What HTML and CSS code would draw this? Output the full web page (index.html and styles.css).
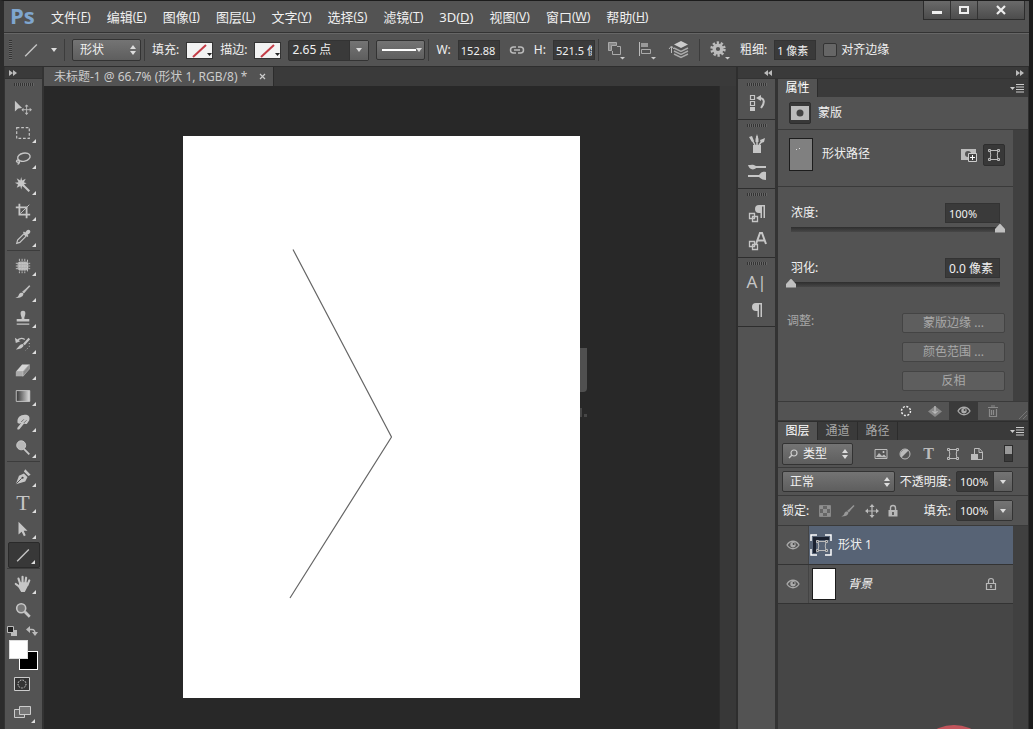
FILE: index.html
```html
<!DOCTYPE html>
<html lang="zh-CN">
<head>
<meta charset="utf-8">
<title>未标题-1</title>
<link rel="stylesheet" href="styles.css">
</head>
<body>
<svg class="sprite" aria-hidden="true">
  <defs>
    <linearGradient id="fade"><stop offset="0" stop-color="#333"/><stop offset="1" stop-color="#ddd"/></linearGradient>
  </defs>
  <symbol id="updown" viewBox="0 0 6 10"><path d="M0 4L3 0l3 4zM0 6l3 4 3-4z" fill="#ddd"/></symbol>
  <symbol id="down" viewBox="0 0 6 4"><path d="M0 0h6L3 4z" fill="#ddd"/></symbol>
  <symbol id="menu" viewBox="0 0 14 9"><path d="M0 3h5L2.500 6z" fill="#ccc"/><path d="M6 .5h8M6 3h8M6 5.500h8M6 8h8" stroke="#ccc"/></symbol>
  <symbol id="right2" viewBox="0 0 8 6"><path d="M0 0l4 3-4 3zM4 0l4 3-4 3z" fill="#bbb"/></symbol>
  <symbol id="left2" viewBox="0 0 8 6"><path d="M4 0L0 3l4 3zM8 0L4 3l4 3z" fill="#bbb"/></symbol>
  <symbol id="line" viewBox="0 0 20 20"><path d="M3.500 17L16.500 4" stroke="#c6c6c6" stroke-width="1.500"/></symbol>
  <symbol id="eye" viewBox="0 0 14 10"><path d="M1 5c3-5 9-5 12 0-3 5-9 5-12 0z" fill="none" stroke="#aaa" stroke-width="1.300"/><circle cx="7" cy="4.800" r="2.700" fill="#aaa"/><circle cx="7.600" cy="4" r="1" fill="#444"/></symbol>
  <symbol id="lock" viewBox="0 0 12 14"><path d="M3.500 6V4a2.500 2.500 0 015 0v2" fill="none" stroke="#b8b8b8" stroke-width="1.400"/><path d="M1.500 6h9v6.500h-9z" fill="#b8b8b8"/><path d="M6 8v3" stroke="#444" stroke-width="1.500"/></symbol>
  <symbol id="lock-o" viewBox="0 0 12 14"><path d="M3.500 6V4a2.500 2.500 0 015 0v2M1.500 6.500h9v6h-9z" fill="none" stroke="#b8b8b8" stroke-width="1.200"/><path d="M6 8v3" stroke="#b8b8b8" stroke-width="1.500"/></symbol>
  <symbol id="cross" viewBox="0 0 14 14"><path d="M7 2v10M2 7h10" stroke="#bbb" stroke-width="1.200"/><path d="M7 0l2.500 3h-5zM7 14l2.500-3h-5zM0 7l3-2.500v5zM14 7l-3-2.500v5z" fill="#bbb"/></symbol>
  <symbol id="vector" viewBox="0 0 14 14"><path d="M3 2.500h8M3 11.500h8M3 2.500q1.500 4.500 0 9M11 2.500q-1.500 4.500 0 9" fill="none" stroke="#bbb"/><path d="M1.500 1.500h2v2h-2zM10.500 1.500h2v2h-2zM1.500 10.500h2v2h-2zM10.500 10.500h2v2h-2z" fill="#555" stroke="#bbb"/></symbol>
  <symbol id="brush" viewBox="0 0 20 20"><path d="M18 2.500L9 9.800l2 2z" fill="#bdbdbd"/><path d="M17.500 3l-7 7.500" stroke="#bdbdbd" stroke-width="1.800"/><path d="M10 11.200c1.500 2-1 6-8.500 5.500 3-1 3.500-2.500 4-4 .8-2 3-2.500 4.500-1.500z" fill="#c6c6c6"/></symbol>
</svg>

<div class="app">
  <header class="menubar">
    <strong class="logo">Ps</strong>
    <nav class="menus" aria-label="主菜单">
      <button>文件<small>(<u>F</u>)</small></button>
      <button>编辑<small>(<u>E</u>)</small></button>
      <button>图像<small>(<u>I</u>)</small></button>
      <button>图层<small>(<u>L</u>)</small></button>
      <button>文字<small>(<u>Y</u>)</small></button>
      <button>选择<small>(<u>S</u>)</small></button>
      <button>滤镜<small>(<u>T</u>)</small></button>
      <button>3D(<u>D</u>)</button>
      <button>视图<small>(<u>V</u>)</small></button>
      <button>窗口<small>(<u>W</u>)</small></button>
      <button>帮助<small>(<u>H</u>)</small></button>
    </nav>
    <div class="winbtns">
      <button aria-label="最小化"><svg width="12" height="10"><path d="M1 6h10v3H1z" fill="#eee"/></svg></button>
      <button aria-label="最大化"><svg width="12" height="10"><path d="M2 2h8v6H2z" fill="none" stroke="#eee" stroke-width="2"/></svg></button>
      <button class="close" aria-label="关闭"><svg width="12" height="10"><path d="M2 1l8 8M10 1L2 9" stroke="#eee" stroke-width="2.200"/></svg></button>
    </div>
  </header>

  <section class="options" aria-label="选项栏">
    <span class="vgrip"></span>
    <button class="preset" aria-label="直线工具"><svg width="18" height="20"><use href="#line"/></svg><svg width="6" height="4"><use href="#down"/></svg></button>
    <span class="vsep"></span>
    <span class="select mode"><select aria-label="工具模式"><option>形状</option></select><svg width="6" height="10"><use href="#updown"/></svg></span>
    <span class="vsep"></span>
    <div class="group">
      <span>填充:</span>
      <button class="swatch" aria-label="填充"><svg width="26" height="17"><path d="M6 15L19 3" stroke="#c43c46" stroke-width="2"/><path d="M20 11h5l-2.500 3z" fill="#222"/></svg></button>
      <span>描边:</span>
      <button class="swatch" aria-label="描边"><svg width="26" height="17"><path d="M6 15L19 3" stroke="#c43c46" stroke-width="2"/><path d="M20 11h5l-2.500 3z" fill="#222"/></svg></button>
      <span class="combo stroke"><input aria-label="描边宽度" value="2.65 点"><button aria-label="展开"><svg width="6" height="4"><use href="#down"/></svg></button></span>
      <button class="dash" aria-label="描边类型"><svg width="46" height="18"><path d="M4 9h34" stroke="#fff" stroke-width="2"/><path d="M38 7h6l-3 4z" fill="#ddd"/></svg></button>
    </div>
    <span class="vsep"></span>
    <div class="group">
      <label for="w">W:</label><input class="field" id="w" value="152.88">
      <button class="link" aria-label="链接"><svg width="16" height="10" fill="none" stroke="#bbb" stroke-width="1.500"><path d="M7 2H4.500a3 3 0 000 6H7M9 2h2.500a3 3 0 010 6H9M5 5h6"/></svg></button>
      <label for="h">H:</label><input class="field" id="h" value="521.5 像素">
    </div>
    <span class="vsep"></span>
    <div class="ops">
      <button aria-label="路径操作"><svg width="20" height="20" fill="none" stroke="#aaa"><path d="M2.500 2.500h8v3h-5v5h-3z" fill="#888"/><path d="M11 6.500h3.500v8h-8V11" /><path d="M14 17h5l-2.500 2.500z" fill="#ccc" stroke="none"/></svg></button>
      <button aria-label="路径对齐"><svg width="20" height="20"><path d="M2.500 2v14" stroke="#bbb"/><path d="M4 3h7v4H4z" fill="#999"/><path d="M4.500 9.500h9v4h-9z" fill="none" stroke="#aaa"/><path d="M14 17h5l-2.500 2.500z" fill="#ccc"/></svg></button>
      <button aria-label="路径排列"><svg width="22" height="20"><path d="M3.500 7v6M1 9l2.500-3L6 9" stroke="#bbb" fill="none"/><path d="M13 1l7 3.500L13 8 6 4.500z" fill="#ccc"/><path d="M6 8l7 3.500L20 8M6 11l7 3.500L20 11M6 14l7 3.500L20 14" fill="none" stroke="#aaa" stroke-width="1.500"/></svg></button>
    </div>
    <span class="vsep"></span>
    <div class="group">
      <button class="gear" aria-label="设置"><svg width="22" height="20"><circle cx="9" cy="9" r="6.200" fill="none" stroke="#bbb" stroke-width="3" stroke-dasharray="2.200 1.690"/><circle cx="9" cy="9" r="3.800" fill="none" stroke="#bbb" stroke-width="3.400"/><path d="M16 17h5l-2.500 2.500z" fill="#ccc"/></svg></button>
      <label for="weight">粗细:</label><input class="field" id="weight" value="1 像素">
      <label class="check"><input type="checkbox">对齐边缘</label>
    </div>
  </section>

  <main class="workspace">
    <aside class="tools" aria-label="工具">
      <div class="dockhead"><svg width="8" height="6"><use href="#right2"/></svg></div>
      <span class="grip"></span>
      <div class="toolset">
        <button class="plain" aria-label="移动"><svg viewBox="0 0 20 20"><path d="M1 3v12l3.500-3.200L9 11z" fill="#c6c6c6"/><svg class="mini" x="8" y="7" width="12" height="12"><use href="#cross"/></svg></svg></button>
        <button aria-label="矩形选框"><svg viewBox="0 0 20 20"><path d="M3 4h14v12H3z" fill="none" stroke="#c6c6c6" stroke-width="1.300" stroke-dasharray="3 2"/></svg></button>
        <button aria-label="套索"><svg viewBox="0 0 20 20" fill="none" stroke="#c6c6c6" stroke-width="1.500"><ellipse cx="11" cy="8" rx="7" ry="4.500" transform="rotate(-12 11 8)"/><path d="M5 11c-3 0-3 3 0 2.500M5 11c2 2 1 4-1 5"/></svg></button>
        <button aria-label="魔棒"><svg viewBox="0 0 20 20"><path d="M8 1l1 4 4-2-2 4 3 1-3 1.500 1 3-3-1.500L8 15l-1-4-4 2 1.500-3.500L1 7.500 5 7 3 2.500 7 5z" fill="#c6c6c6"/><path d="M10 10l7 7" stroke="#c6c6c6" stroke-width="2.200"/></svg></button>
        <button aria-label="裁剪"><svg viewBox="0 0 20 20" fill="none" stroke="#c6c6c6" stroke-width="2"><path d="M2 6h12v12M6 2v12h12"/><path d="M7 13L17 3" stroke-width="1"/></svg></button>
        <button aria-label="吸管"><svg viewBox="0 0 20 20"><path d="M3 17l1-3.500 7-7L13.500 9l-7 7z" fill="#555" stroke="#c6c6c6" stroke-width="1.300"/><path d="M10 5l5 5 1-1-1-1.500C18 6 19 4 17.500 2.500S14 2 12.500 5L11 4z" fill="#c6c6c6"/></svg></button>
      </div>
      <div class="toolset">
        <button aria-label="修补"><svg viewBox="0 0 20 20"><rect x="4" y="5" width="12" height="10" rx="3" fill="#b0b0b0"/><path d="M6 2v16M9 2v16M12 2v16M15 3v14M2 7h16M2 10h16M2 13h16" stroke="#c6c6c6" stroke-dasharray="2.500 1"/></svg></button>
        <button aria-label="画笔"><svg><use href="#brush"/></svg></button>
        <button aria-label="仿制图章"><svg viewBox="0 0 20 20" fill="#c6c6c6"><path d="M8.500 9.500C7 6 6.500 2 10 2s3 4 1.500 7.500V11H17v3H3v-3h5.500zM3 16h14v1.500H3z"/></svg></button>
        <button aria-label="历史记录画笔"><svg viewBox="0 0 20 20"><path d="M17 4l-6 6.500" stroke="#c6c6c6" stroke-width="2.500"/><path d="M10 10c2 2-1 6-8 6 3-2 4-6 8-6z" fill="#c6c6c6"/><path d="M3 7c3-4 6-4 9-2" stroke="#c6c6c6" fill="none" stroke-width="1.500"/><path d="M1 3l1 6 5-2z" fill="#c6c6c6"/><path d="M17 9v4l-4 4" stroke="#c6c6c6" fill="none" stroke-dasharray="1 2"/></svg></button>
        <button aria-label="橡皮擦"><svg viewBox="0 0 20 20"><path d="M2 12L9 4h8l-7 8z" fill="#d5d5d5"/><path d="M2 12h8v5H2z" fill="#aaa"/><path d="M10 12l7-8v5l-7 8z" fill="#8a8a8a" stroke="#ccc" stroke-width=".6"/></svg></button>
        <button aria-label="渐变"><svg viewBox="0 0 20 20"><path d="M2.500 4h15v12h-15z" fill="url(#fade)" stroke="#ccc"/></svg></button>
        <button aria-label="涂抹"><svg viewBox="0 0 20 20"><path d="M4 11C3 5 7 2 12 2c4 0 6 2 5 6l-2 3c-1 2-3 1-4 1l-5 6c-2 1-3 0-2-2l4-5-2 1z" fill="#c6c6c6"/><path d="M8 10l3-3M11 11l3-3" stroke="#666"/></svg></button>
        <button aria-label="减淡"><svg viewBox="0 0 20 20"><circle cx="8" cy="7" r="5" fill="#b8b8b8" stroke="#ccc"/><path d="M11 11l6 6" stroke="#c6c6c6" stroke-width="2"/></svg></button>
      </div>
      <div class="toolset">
        <button aria-label="钢笔"><svg viewBox="0 0 20 20"><path d="M2 18L5.500 8.500 11 6l4 4-2.500 5z" fill="#c6c6c6"/><path d="M11 4l1.500-2.500 6 6L16 9z" fill="#c6c6c6"/><path d="M2.500 17.500l6-6" stroke="#444"/><circle cx="9.500" cy="10.800" r="1.200" fill="#444"/></svg></button>
        <button class="type" aria-label="文字">T</button>
        <button aria-label="路径选择"><svg viewBox="0 0 20 20"><path d="M5 2v14l3.500-3L11 18l2-1-2.200-5H15z" fill="#c6c6c6"/></svg></button>
        <button class="active" aria-label="直线" aria-pressed="true"><svg><use href="#line"/></svg></button>
      </div>
      <div class="toolset">
        <button aria-label="抓手"><svg viewBox="0 0 20 20" fill="none" stroke="#c6c6c6" stroke-width="2.400" stroke-linecap="round"><path d="M7 10L5 4M9.500 9V2M12.500 9.500L13.500 3M15 11l2-5M6 13l-4-3"/><path d="M6 8h9l1 3-2 4-2 4H8l-3-5z" fill="#c6c6c6" stroke="none"/></svg></button>
        <button class="plain" aria-label="缩放"><svg viewBox="0 0 20 20"><circle cx="8" cy="8" r="5" fill="#777" stroke="#c6c6c6" stroke-width="1.800"/><path d="M12 12l5.500 5.500" stroke="#c6c6c6" stroke-width="3"/></svg></button>
      </div>
      <div class="colorops">
        <button aria-label="默认颜色"><svg width="10" height="10"><path d="M4 4h6v6H4z" fill="#bbb"/><path d="M.5.5h6v6h-6z" fill="#222" stroke="#bbb"/></svg></button>
        <button aria-label="切换颜色"><svg width="12" height="10"><path d="M2 3.500h4q3 0 3 4" fill="none" stroke="#bbb" stroke-width="1.300"/><path d="M0 3.500L4 0v7zM6 6h6l-3 4z" fill="#bbb"/></svg></button>
      </div>
      <div class="colors"><button class="fg" aria-label="前景色"></button><button class="bg" aria-label="背景色"></button></div>
      <button class="screen" aria-label="快速蒙版"><svg width="20" height="14"><path d="M2.500.5h15v13h-15z" fill="#333" stroke="#ccc"/><circle cx="10" cy="7" r="4" fill="none" stroke="#ddd" stroke-dasharray="1.500 1.200"/></svg></button>
      <button class="screen corner" aria-label="屏幕模式"><svg width="20" height="14"><path d="M2.500 4.500h10v8h-10z" fill="#666" stroke="#ccc"/><path d="M7.500 1.500h11v8h-11z" fill="#777" stroke="#ccc"/></svg></button>
    </aside>

    <section class="document">
      <div class="tabs"><div class="tab">未标题-1 @ 66.7% (形状 1, RGB/8) *<button aria-label="关闭文档"><svg width="7" height="7"><path d="M1 1l5 5M6 1L1 6" stroke="#ccc" stroke-width="1.200"/></svg></button></div></div>
      <div class="stage">
        <div class="canvas">
          <div class="page">
            <svg class="mark" width="12" height="72"><path d="M0 0h7v40q0 4-4 4H0z" fill="#505050"/><path d="M0 60h2v9H0zM4 66h3v3H4z" fill="#464646"/></svg>
            <svg class="art" viewBox="0 0 397 562"><path d="M110 113.500L208.500 301 107 462" fill="none" stroke="#666" stroke-width="1.200"/></svg>
          </div>
        </div>
        <div class="scroll"></div>
      </div>
    </section>

    <aside class="dock">
      <div class="dockhead right"><svg width="8" height="6"><use href="#left2"/></svg><svg width="8" height="6"><use href="#right2"/></svg></div>
      <div class="dockbody">
        <div class="iconcol">
          <div class="icongroup"><span class="grip"></span>
            <button aria-label="历史记录"><svg viewBox="0 0 20 20"><path d="M3.500 2.500h4v4h-4zM3.500 8.500h4v4h-4z" fill="none" stroke="#c6c6c6" stroke-width="1.200"/><path d="M3 14h5v4H3z" fill="#c6c6c6"/><path d="M12 5c6 0 6 5 2 10" stroke="#c6c6c6" fill="none" stroke-width="2"/><path d="M9 5l5-3v6z" fill="#c6c6c6"/></svg></button></div>
          <div class="icongroup"><span class="grip"></span>
            <button aria-label="画笔预设"><svg viewBox="0 0 20 20" fill="#c6c6c6"><path d="M6 11h8v8H6z"/><path d="M8 11L4 4M10 11V2M12 11l4-5" stroke="#c6c6c6" stroke-width="1.500"/><path d="M2 3l3-1 2 5-2 1zM8.500 5L10 0l1.500 5v3h-3zM13 6l5-2-1 4-3 1z"/></svg></button>
            <button aria-label="画笔"><svg viewBox="0 0 20 20" fill="#c6c6c6"><path d="M1 3c3 0 5-1 8 1h10v2H9c-3 3-7 1-8-3zM1 13h11c2-3 4-4 7-3v8c-3 0-5-1-7-3H1z"/></svg></button></div>
          <div class="icongroup"><span class="grip"></span>
            <button aria-label="段落样式"><svg viewBox="0 0 20 20"><path d="M12 10a4 4 0 010-8h6v13h-1.500V3.500H15V15h-1.500v-5z" fill="#c6c6c6"/><path d="M2.500 10.500h5v5h-5zM5.500 13.500h5v5h-5z" fill="none" stroke="#c6c6c6" stroke-width="1.300"/></svg></button>
            <button aria-label="字符样式"><svg viewBox="0 0 20 20"><path d="M9 13l4-11h2l4 11M10 9.500h8" stroke="#c6c6c6" stroke-width="2" fill="none"/><path d="M2.500 10.500h5v5h-5zM5.500 13.500h5v5h-5z" fill="#535353" stroke="#c6c6c6" stroke-width="1.300"/></svg></button></div>
          <div class="icongroup"><span class="grip"></span>
            <button class="glyph" aria-label="字符">A|</button>
            <button aria-label="段落"><svg viewBox="0 0 20 20"><path d="M9 11a4 4 0 010-8h6v14h-1.500V4.500H12V17h-1.500v-6z" fill="#c6c6c6"/></svg></button></div>
        </div>

        <div class="panels">
          <section class="properties">
            <div class="ptabs"><button class="on">属性</button><button class="pmenu" aria-label="面板菜单"><svg width="14" height="9"><use href="#menu"/></svg></button></div>
            <div class="masktitle"><span class="pressed"><svg width="18" height="14"><path d="M0 0h18v14H0z" fill="#bbb"/><circle cx="9" cy="7" r="3.500" fill="#444"/></svg></span>蒙版</div>
            <div class="scroller">
              <div class="inner">
                <div class="shape"><span class="thumb"><svg width="22" height="31"><path d="M9 9h1v1H9zM6 10h1v1H6z" fill="#ddd"/></svg></span><span class="grow">形状路径</span>
                  <button aria-label="像素蒙版"><svg width="18" height="16"><path d="M1 2h15v11H1z" fill="#bbb"/><circle cx="8" cy="7" r="3" fill="#555"/><path d="M8.500 6.500h8v8h-8z" fill="#444" stroke="#ccc"/><path d="M12.500 8v5M10 10.500h5" stroke="#fff"/></svg></button>
                  <button class="pressed" aria-label="矢量蒙版" aria-pressed="true"><svg width="14" height="14"><use href="#vector"/></svg></button></div>
                <div class="sliders">
                  <div class="row"><label for="density">浓度:</label><input class="field wide" id="density" value="100%"></div>
                  <input type="range" aria-label="浓度" value="100">
                  <div class="row"><label for="feather">羽化:</label><input class="field wide" id="feather" value="0.0 像素"></div>
                  <input type="range" aria-label="羽化" value="0">
                </div>
                <div class="adjust"><span>调整:</span><div class="btns"><button disabled>蒙版边缘 ...</button><button disabled>颜色范围 ...</button><button disabled>反相</button></div></div>
              </div>
            </div>
            <div class="pfoot">
              <button aria-label="载入选区"><svg width="12" height="12"><circle cx="6" cy="6" r="4.500" fill="none" stroke="#eee" stroke-width="1.400" stroke-dasharray="2 1.500"/></svg></button>
              <button aria-label="应用蒙版"><svg width="16" height="12"><path d="M8 1l7 5.500L8 12 1 6.500z" fill="#888"/><path d="M8 1v7M5.500 6L8 8.500 10.500 6" stroke="#ccc" fill="none"/></svg></button>
              <button class="on" aria-label="停用蒙版"><svg width="14" height="10"><use href="#eye"/></svg></button>
              <button aria-label="删除蒙版"><svg width="12" height="12" fill="none" stroke="#8a8a8a"><path d="M1 2.500h10M4 1h4M2.500 4v7.500h7V4M4.500 5v5M6.500 5v5" stroke-width="1.200"/></svg></button>
              <span class="resize"></span>
            </div>
          </section>

          <section class="layers">
            <div class="ptabs"><button class="on">图层</button><button>通道</button><button>路径</button><button class="pmenu" aria-label="面板菜单"><svg width="14" height="9"><use href="#menu"/></svg></button></div>
            <div class="filter">
              <span class="select kind"><svg width="10" height="10"><circle cx="6" cy="4" r="3" fill="none" stroke="#ccc" stroke-width="1.200"/><path d="M4 6L1 9" stroke="#ccc" stroke-width="1.500"/></svg><select aria-label="滤镜类型"><option>类型</option></select><svg width="6" height="10"><use href="#updown"/></svg></span>
              <div class="ficons">
                <button aria-label="像素图层"><svg width="14" height="14"><path d="M1 2.500h12v9H1z" fill="#555" stroke="#bbb"/><path d="M2 10l3-4 3 3 2-1.500 3 3z" fill="#bbb"/><circle cx="9.500" cy="5" r="1" fill="#ccc"/></svg></button>
                <button aria-label="调整图层"><svg width="14" height="14"><circle cx="7" cy="7" r="5" fill="#555" stroke="#bbb"/><path d="M3.500 10.500A5 5 0 0110.500 3.500z" fill="#bbb"/></svg></button>
                <button class="t" aria-label="文字图层">T</button>
                <button aria-label="形状图层"><svg width="14" height="14"><use href="#vector"/></svg></button>
                <button aria-label="智能对象"><svg width="14" height="14"><path d="M4.500 7V1.500h5L12.500 5v7.500H8M9 2v3.500h3" fill="none" stroke="#bbb"/><path d="M1 7h7v6H1z" fill="#bbb"/></svg></button>
              </div>
              <button class="switch" aria-label="滤镜开关"></button>
            </div>
            <div class="blend"><span class="select"><select aria-label="混合模式"><option>正常</option></select><svg width="6" height="10"><use href="#updown"/></svg></span>
              <label for="op">不透明度:</label><span class="combo"><input id="op" value="100%"><button aria-label="展开"><svg width="6" height="4"><use href="#down"/></svg></button></span></div>
            <div class="locks"><span>锁定:</span>
              <div class="lockicons">
                <button aria-label="锁定透明像素"><svg width="12" height="12"><path d="M.5.500h11v11H.500z" fill="#666" stroke="#888"/><path d="M1 1h3v3H1zM8 1h3v3H8zM4 4h4v4H4zM1 8h3v3H1zM8 8h3v3H8z" fill="#909090"/></svg></button>
                <button class="dim" aria-label="锁定图像像素"><svg width="18" height="16"><use href="#brush"/></svg></button>
                <button aria-label="锁定位置"><svg width="14" height="14"><use href="#cross"/></svg></button>
                <button aria-label="锁定全部"><svg width="12" height="14"><use href="#lock"/></svg></button>
              </div>
              <label for="fill">填充:</label><span class="combo"><input id="fill" value="100%"><button aria-label="展开"><svg width="6" height="4"><use href="#down"/></svg></button></span></div>
            <div class="scroller list">
              <div class="inner">
                <div class="layer selected"><button class="vis" aria-label="可见"><svg width="14" height="10"><use href="#eye"/></svg></button>
                  <div class="entry"><svg width="22" height="22"><path d="M3 19V3h16v3H6v13z" fill="#1c2230"/><path d="M1 7V1h6M15 1h6v6M21 15v6h-6M7 21H1v-6" fill="none" stroke="#fff" stroke-width="1.500"/><svg x="5" y="5" width="14" height="14"><use href="#vector"/></svg></svg><span class="grow">形状 1</span></div></div>
                <div class="layer"><button class="vis" aria-label="可见"><svg width="14" height="10"><use href="#eye"/></svg></button>
                  <div class="entry base"><span class="white"></span><em class="grow">背景</em><svg width="12" height="14"><use href="#lock-o"/></svg></div></div>
              </div>
              <span class="badge"></span>
            </div>
          </section>
        </div>
      </div>
    </aside>
  </main>
</div>
</body>
</html>
```
FILE: styles.css
```css
* { box-sizing: border-box; }
body {
  margin: 0;
  background: #202020;
  color: #f0f0f0;
  font: 12px/16px "Noto Sans", "Noto Sans CJK SC", sans-serif;
}
button, input, select { font: inherit; color: inherit; margin: 0; padding: 0; border: 0; background: none; border-radius: 0; }
button { display: flex; align-items: center; justify-content: center; }
svg { display: block; flex: none; }
.sprite { position: absolute; width: 0; height: 0; }
.grow { flex: 1; }

.app {
  min-height: 100vh;
  display: flex;
  flex-direction: column;
  background: #535353;
  border: solid #1c1c1c;
  border-width: 1px 4px 0;
  border-left-color: #2c2c2c;
}

/* menu bar */
.menubar { display: flex; height: 32px; border-bottom: 1px solid #333; }
.logo { width: 44px; padding-left: 6px; color: #7fa6cf; font: bold 22px/28px "Open Sans", "Noto Sans", sans-serif; }
.menus { display: flex; flex: 1; align-items: center; gap: 16px; font-size: 13px; padding-left: 3px; }
.menus small { font-size: 12px; }
.winbtns { display: flex; height: 19px; margin-right: 4px; border: 1px solid #2c2c2c; border-top: 0; background: linear-gradient(#6a6a6a, #4c4c4c); }
.winbtns button { width: 27px; border-right: 1px solid #333; }
.winbtns .close { width: 46px; border-right: 0; }

/* options bar */
.options { display: flex; align-items: center; height: 34px; padding-left: 5px; border-top: 1px solid #666; border-bottom: 1px solid #2e2e2e; }
.vgrip { width: 3px; height: 20px; background: repeating-linear-gradient(#333 0 1px, #666 1px 2px); }
.preset { gap: 11px; width: 49px; padding-left: 5px; }
.vsep { width: 1px; height: 22px; margin: 0 7px 0 3px; background: #3c3c3c; }
.group { display: flex; align-items: center; gap: 7px; }
.select, .combo, .dash { display: flex; align-items: center; border: 1px solid #333; border-radius: 2px; background: linear-gradient(#747474, #5e5e5e); }
.select { height: 22px; padding: 0 4px 0 7px; }
.select select { flex: 1; min-width: 0; appearance: none; outline: 0; }
.mode { width: 69px; }
.swatch { height: 17px; background: #f2f2f2; border: 1px solid #333; width: 27px; overflow: hidden; }
.combo { height: 21px; background: #3a3a3a; }
.combo input { width: 36px; padding-left: 3px; font-size: 11px; }
.combo.stroke input { width: 60px; font-size: 12px; }
.combo button { width: 19px; height: 19px; border-left: 1px solid #333; background: linear-gradient(#747474, #5e5e5e); }
.dash { width: 49px; height: 20px; }
.field { width: 42px; height: 20px; padding: 0 2px; background: #3a3a3a; border: 1px solid #333; font-size: 11px; }
.link { width: 20px; height: 20px; }
.ops { display: flex; gap: 11px; padding-right: 6px; }
.gear { width: 26px; }
.check { display: flex; align-items: center; gap: 4px; }
.check input { appearance: none; width: 14px; height: 14px; border: 1px solid #333; border-radius: 2px; background: #666; }

/* workspace */
.workspace { flex: 1; display: flex; }
.dockhead { display: flex; align-items: center; height: 12px; padding: 0 4px; background: #3a3a3a; border-bottom: 1px solid #333; }
.dockhead.right { justify-content: space-between; padding-left: 26px; }
.grip { display: block; width: 20px; height: 3px; margin: 4px auto 3px; background: repeating-linear-gradient(90deg, #333 0 1px, #666 1px 2px); }

.tools { width: 40px; border: solid #333; border-width: 0 2px 0 1px; }
.tools .grip { margin-bottom: 8px; }
.toolset { margin: 0 2px 2px; border-bottom: 1px solid #3c3c3c; }
.toolset:nth-of-type(5) { margin-bottom: 0; border-color: #535353; }
.toolset button { position: relative; width: 32px; height: 26px; margin: 0 auto; padding-right: 1px; }
.toolset svg { width: 18px; height: 18px; }
.toolset .mini { width: 12px; height: 12px; }
.toolset button:not(.plain)::after, .corner::after {
  content: ""; position: absolute; right: 4px; bottom: 3px;
  border: 2px solid; border-color: transparent #ddd #ddd transparent;
}
.toolset .active { background: #383838; border: 1px solid #2a2a2a; border-radius: 2px; }
.toolset .type { font: 22px/26px "Liberation Serif", serif; color: #c6c6c6; }
.colorops { display: flex; justify-content: space-between; padding: 2px 4px 4px 2px; }
.colors { position: relative; width: 29px; height: 30px; margin: 0 auto; }
.colors button { position: absolute; width: 19px; height: 19px; }
.fg { z-index: 1; top: 0; left: 0; background: #fff; border: 1px solid #ddd; }
.bg { right: 0; bottom: 0; background: #000; border: 1px solid #fff; }
.screen { position: relative; width: 34px; height: 28px; }

.document { flex: 1; min-width: 0; display: flex; flex-direction: column; }
.tabs { display: flex; height: 19px; background: #3a3a3a; }
.tab { display: flex; align-items: center; gap: 12px; padding: 0 7px 0 10px; background: #535353; color: #ccc; white-space: nowrap; border-right: 1px solid #2c2c2c; }
.stage { flex: 1; display: flex; background: #282828; }
.canvas { flex: 1; display: flex; justify-content: center; align-items: flex-start; padding-top: 50px; }
.page { position: relative; width: 397px; aspect-ratio: 397 / 562; background: #fff; }
.art { width: 100%; }
.mark { position: absolute; left: 100%; top: 212px; }
.scroll { width: 17px; background: #383838; border-left: 1px solid #2c2c2c; }

.dock { width: 293px; display: flex; flex-direction: column; border: solid #2e2e2e; border-width: 0 1px 0 2px; }
.dockbody { flex: 1; display: flex; }
.iconcol { width: 40px; border-right: 3px solid #333; }
.icongroup { padding-bottom: 2px; border-bottom: 1px solid #2e2e2e; }
.icongroup button { width: 37px; height: 28px; }
.icongroup svg { width: 20px; height: 20px; }
.glyph { font-size: 17px; color: #c6c6c6; }

.panels { flex: 1; min-width: 0; display: flex; flex-direction: column; }
.ptabs { display: flex; height: 18px; background: #3a3a3a; }
.ptabs button { width: 40px; color: #a8a8a8; border-right: 1px solid #2c2c2c; }
.ptabs .on { background: #535353; color: #fff; }
.ptabs .pmenu { width: 22px; margin-left: auto; border: 0; }
.masktitle { display: flex; align-items: center; gap: 7px; height: 33px; padding-left: 11px; border-bottom: 1px solid #3a3a3a; }
.pressed { display: flex; align-items: center; justify-content: center; width: 22px; height: 22px; background: #383838; border: 1px solid #2e2e2e; border-radius: 2px; }
.scroller { display: flex; padding-right: 15px; background: #404040; }
.inner { flex: 1; min-width: 0; background: #535353; }
.shape { display: flex; align-items: flex-start; gap: 5px; padding: 8px 8px 15px 11px; line-height: 32px; border-bottom: 1px solid #3a3a3a; }
.shape .thumb { height: 33px; margin-right: 4px; background: #808080; border: 1px solid #1c1c1c; }
.shape button { height: 22px; margin-top: 6px; }
.sliders { padding: 16px 13px 0; }
.row { display: flex; align-items: center; justify-content: space-between; }
.wide { width: 55px; padding: 0 3px; }
.wide#feather { font-size: 12px; }
input[type=range] { appearance: none; display: block; width: calc(100% + 10px); height: 10px; margin: 1px -5px 24px; outline: 0; }
input[type=range]::-webkit-slider-runnable-track { height: 5px; background: linear-gradient(#2e2e2e, #474747) center / calc(100% - 10px) 100% no-repeat; }
input[type=range]::-webkit-slider-thumb { appearance: none; width: 10px; height: 9px; margin-top: -3px; background: #c0c0c0; clip-path: polygon(50% 0, 100% 60%, 100% 100%, 0 100%, 0 60%); }
.adjust { display: flex; justify-content: space-between; padding: 0 8px 10px 9px; color: #a8a8a8; }
.btns { display: grid; gap: 9px; width: 103px; }
.btns button { height: 20px; background: #5e5e5e; border: 1px solid #444; border-radius: 2px; }
.pfoot { display: flex; justify-content: flex-end; height: 20px; border: solid #3a3a3a; border-width: 1px 0; }
.pfoot button { width: 29px; }
.pfoot .on { background: #3a3a3a; }
.resize { width: 10px; height: 10px; margin: 7px 1px 0 10px; background: repeating-linear-gradient(135deg, #535353 0 2px, #777 2px 3px); clip-path: polygon(100% 0, 100% 100%, 0 100%); }

.layers { flex: 1; display: flex; flex-direction: column; border-top: 1px solid #2e2e2e; }
.filter, .blend, .locks { display: flex; align-items: center; height: 28px; padding: 0 15px 0 4px; border-bottom: 1px solid #3a3a3a; }
.filter { justify-content: space-between; }
.kind { width: 71px; padding-left: 5px; gap: 5px; }
.ficons { display: flex; gap: 10px; }
.ficons .t { width: 14px; font: bold 16px/14px "Liberation Serif", serif; color: #bbb; }
.switch { width: 9px; height: 17px; border: 1px solid #2c2c2c; background: linear-gradient(#999 50%, #3a3a3a 50%); }
.blend { gap: 5px; }
.blend .select { flex: 1; height: 21px; }
.locks { gap: 5px; height: 30px; }
.lockicons { display: flex; align-items: center; gap: 8px; flex: 1; padding-left: 5px; }
.dim { opacity: .6; }
.list { flex: 1; position: relative; overflow: hidden; }
.list .inner { background: #464646; }
.layer { display: flex; height: 39px; border-bottom: 1px solid #333; background: #535353; }
.vis { width: 31px; border-right: 1px solid #444; }
.entry { flex: 1; display: flex; align-items: center; gap: 6px; padding: 0 16px 0 1px; }
.selected .entry { background: #576375; }
.entry.base { padding-left: 3px; gap: 12px; }
.white { width: 24px; height: 32px; background: #fff; border: 1px solid #1c1c1c; }
.badge { position: absolute; right: 34px; bottom: -76px; width: 80px; height: 80px; border-radius: 50%; background: #c2555c; }
```
